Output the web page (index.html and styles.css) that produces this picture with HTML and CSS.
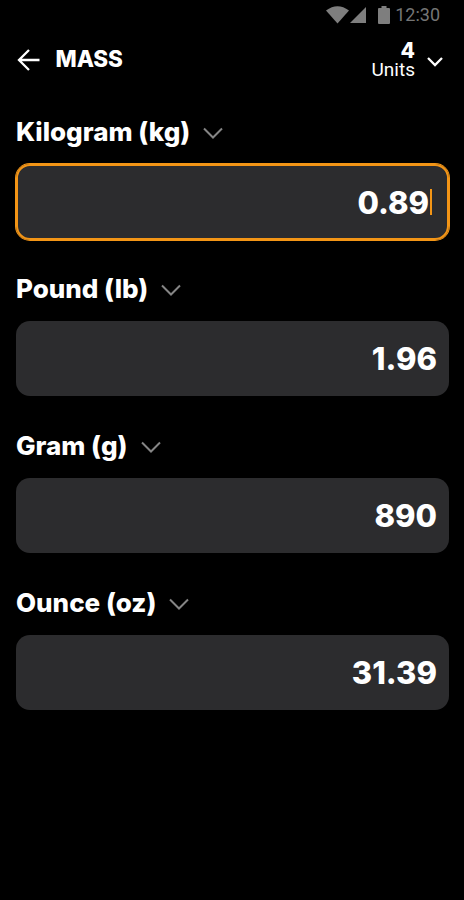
FILE: index.html
```html
<!DOCTYPE html>
<html lang="en">
<head>
  <meta charset="UTF-8">
  <meta name="viewport" content="width=device-width, initial-scale=1.0">
  <title>Mass</title>
  <link rel="stylesheet" href="styles.css">
</head>
<body>
<div class="status-bar">
  <svg class="wifi" width="23" height="18" viewBox="0 0 23 18"><path d="M0 4.500Q11.500 -4 23 4.500L11.500 17.500Z"/></svg>
  <svg class="signal" width="16" height="16" viewBox="0 0 16 16"><path d="M16 0V16H0Z"/></svg>
  <svg class="battery" width="12" height="18" viewBox="0 0 12 18"><path d="M3.500 0H8.500V2H11Q12 2 12 3V17Q12 18 11 18H1Q0 18 0 17V3Q0 2 1 2H3.500Z"/></svg>
  <span class="time">12:30</span>
</div>

<div class="header">
  <svg class="back" width="24" height="24" viewBox="0 0 24 24"><path d="M23.500 12H3.500M13 2L3 12L13 22"/></svg>
  <h1>MASS</h1>
  <div class="units">
    <span class="count">4</span>
    <span class="caption">Units</span>
  </div>
  <svg class="arrow" width="16" height="10" viewBox="0 0 16 10"><path d="M1 1L8 8L15 1"/></svg>
</div>

<div class="converter">
  <div class="form-group">
    <div class="label"><span>Kilogram (kg)</span><svg class="arrow" width="20" height="12" viewBox="0 0 20 12"><path d="M1 1.500L10 10.500L19 1.500"/></svg></div>
    <div class="field active"><span class="value">0.89</span><span class="cursor"></span></div>
  </div>
  <div class="form-group">
    <div class="label"><span>Pound (lb)</span><svg class="arrow" width="20" height="12" viewBox="0 0 20 12"><path d="M1 1.500L10 10.500L19 1.500"/></svg></div>
    <div class="field"><span class="value">1.96</span></div>
  </div>
  <div class="form-group">
    <div class="label"><span>Gram (g)</span><svg class="arrow" width="20" height="12" viewBox="0 0 20 12"><path d="M1 1.500L10 10.500L19 1.500"/></svg></div>
    <div class="field"><span class="value">890</span></div>
  </div>
  <div class="form-group">
    <div class="label"><span>Ounce (oz)</span><svg class="arrow" width="20" height="12" viewBox="0 0 20 12"><path d="M1 1.500L10 10.500L19 1.500"/></svg></div>
    <div class="field"><span class="value">31.39</span></div>
  </div>
</div>
</body>
</html>
```
FILE: styles.css
```css
body {
    font-family: Inter, sans-serif;
    margin: 0;
    background-color: #000;
    color: #fff;
}

svg {
    display: block;
    flex: none;
}

.status-bar {
    display: flex;
    align-items: center;
    justify-content: flex-end;
    height: 30px;
    padding-right: 24px;
    color: #757575;
    fill: #7e7e7e;
}

.signal {
    margin-left: 1px;
}

.battery {
    margin: 0 5px 0 12px;
}

.time {
    font-family: Roboto, sans-serif;
    font-size: 18px;
    line-height: 30px;
}

.header {
    display: flex;
    align-items: center;
    height: 60px;
    padding: 0 21px 0 16px;
}

.header svg,
.label svg {
    fill: none;
    stroke: #fff;
    stroke-width: 2.300;
}

h1 {
    flex: 1;
    margin: 0 0 2px 15.500px;
    font-size: 22.500px;
    font-weight: 800;
    line-height: 30px;
    letter-spacing: -0.100px;
}

.units {
    display: flex;
    flex-direction: column;
    align-items: flex-end;
    margin-right: 12px;
}

.header .arrow {
    margin-top: 3px;
}

.count {
    font-size: 21px;
    font-weight: 800;
    line-height: 18px;
}

.caption {
    font-family: Roboto, sans-serif;
    font-size: 19px;
    line-height: 19px;
}

.converter {
    padding: 22px 15px 0 16px;
}

.form-group {
    height: 157px;
}

.label {
    display: flex;
    align-items: center;
    height: 40px;
    margin-bottom: 12px;
    font-size: 26px;
    font-weight: 800;
}

.label span {
    margin-bottom: 2px;
}

.label svg {
    margin: 1px 0 0 13px;
    stroke: #858585;
    stroke-width: 2;
}

.field {
    display: flex;
    align-items: center;
    justify-content: flex-end;
    box-sizing: border-box;
    height: 75px;
    padding-right: 12px;
    background-color: #2c2c2e;
    border-radius: 14px;
    font-size: 31px;
    font-weight: 800;
}

.active {
    height: 76px;
    padding-right: 17px;
    box-shadow: 0 0 0 1px #f39516, inset 0 0 0 2px #f39516;
}

.cursor {
    width: 2px;
    height: 26px;
    margin-left: 1px;
    background-color: #f39516;
}
```
